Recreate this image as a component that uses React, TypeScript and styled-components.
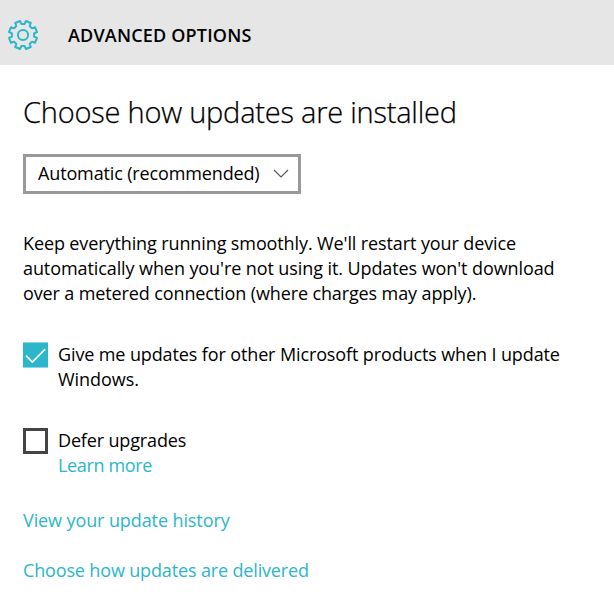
import React from 'react';
import styled, { createGlobalStyle } from 'styled-components';

const accent = '#2bb6cb';

const GlobalStyle = createGlobalStyle`
  * { box-sizing: border-box; }
  body {
    margin: 0;
    background: #fff;
    color: #000;
    font-family: 'Open Sans', 'Noto Sans', sans-serif;
    font-size: 18px;
    line-height: 25px;
  }
`;

const Page = styled.div`
  width: 614px;
  height: 613px;
  overflow: hidden;
  background: #fff;
`;

const Header = styled.header`
  display: flex;
  align-items: center;
  height: 65px;
  padding: 5px 0 0 7px;
  background: #e6e6e6;
`;

const HeaderTitle = styled.div`
  margin-left: 29px;
  font-size: 18px;
  font-weight: 600;
  letter-spacing: 0.18px;
  white-space: nowrap;
`;

const Content = styled.main`
  display: flex;
  flex-direction: column;
  align-items: flex-start;
  padding: 27px 0 0 23px;
`;

const Heading = styled.h1`
  margin: 0;
  font-size: 29px;
  font-weight: 300;
  line-height: 40px;
  letter-spacing: -0.23px;
  -webkit-text-stroke: 0.25px #000;
  white-space: nowrap;
`;

const Select = styled.button`
  display: flex;
  align-items: center;
  justify-content: space-between;
  width: 278px;
  height: 40px;
  margin: 22px 0 37px;
  padding: 0 9px 2px 12px;
  border: 3px solid #999;
  background: #fff;
  color: #000;
  font: inherit;
`;

const Line = styled.span<{ $tracking?: number }>`
  display: block;
  width: max-content;
  white-space: nowrap;
  letter-spacing: ${(p) => p.$tracking ?? 0}px;
`;

const Option = styled.label<{ $gap: number }>`
  display: flex;
  align-items: flex-start;
  gap: 10px;
  margin-top: ${(p) => p.$gap}px;
`;

const Box = styled.span<{ $checked?: boolean }>`
  display: flex;
  align-items: center;
  width: 25px;
  height: 26px;
  border: 0 solid ${(p) => (p.$checked ? '#8fd8e3' : '#444')};
  border-width: ${(p) => (p.$checked ? '1px 0' : '3px')};
  background: ${(p) => (p.$checked ? accent : '#fff')};
`;

const Link = styled.a<{ $gap?: number }>`
  display: block;
  margin-top: ${(p) => p.$gap ?? 0}px;
  color: ${accent};
  text-decoration: none;
`;

const toothStep = 45;
const toothProfile: [number, number][] = [
  [-14, 11.2],
  [-10.5, 14.3],
  [10.5, 14.3],
  [14, 11.2],
];
const gearPoints = Array.from({ length: 8 }, (_, i) =>
  toothProfile.map(([offset, radius]) => {
    const a = ((i * toothStep + 22.5 + offset) * Math.PI) / 180;
    return `${(16 + radius * Math.cos(a)).toFixed(2)},${(16 + radius * Math.sin(a)).toFixed(2)}`;
  }).join(' '),
).join(' ');

const Gear = () => (
  <svg width="32" height="32" viewBox="0 0 32 32" fill="none" stroke={accent} strokeWidth="2">
    <polygon points={gearPoints} strokeLinejoin="round" />
    <circle cx="16" cy="16" r="5.1" />
  </svg>
);

const Chevron = () => (
  <svg width="16" height="10" viewBox="0 0 16 10" fill="none" stroke="#555" strokeWidth="1.1">
    <path d="M1 2 8 9 15 2" />
  </svg>
);

const Check = () => (
  <svg width="25" height="24" viewBox="0 0.5 25 24" fill="none" stroke="#fff" strokeWidth="1.7">
    <path d="M3 13.2 9.3 19.5 22.2 6.6" />
  </svg>
);

export default function App() {
  return (
    <>
      <GlobalStyle />
      <Page>
        <Header>
          <Gear />
          <HeaderTitle>ADVANCED OPTIONS</HeaderTitle>
        </Header>
        <Content>
          <Heading>Choose how updates are installed</Heading>
          <Select>
            <Line $tracking={-0.14}>Automatic (recommended)</Line>
            <Chevron />
          </Select>
          <div>
            <Line $tracking={-0.11}>Keep everything running smoothly. We'll restart your device</Line>
            <Line $tracking={-0.09}>automatically when you're not using it. Updates won't download</Line>
            <Line $tracking={-0.12}>over a metered connection (where charges may apply).</Line>
          </div>
          <Option $gap={36}>
            <Box $checked>
              <Check />
            </Box>
            <div>
              <Line $tracking={-0.12}>Give me updates for other Microsoft products when I update</Line>
              <Line $tracking={-0.05}>Windows.</Line>
            </div>
          </Option>
          <Option $gap={36}>
            <Box />
            <div>
              <Line $tracking={-0.15}>Defer upgrades</Line>
              <Link href="#">
                <Line $tracking={-0.34}>Learn more</Line>
              </Link>
            </div>
          </Option>
          <Link href="#" $gap={30}>
            <Line $tracking={-0.1}>View your update history</Line>
          </Link>
          <Link href="#" $gap={25}>
            <Line $tracking={-0.15}>Choose how updates are delivered</Line>
          </Link>
        </Content>
      </Page>
    </>
  );
}
